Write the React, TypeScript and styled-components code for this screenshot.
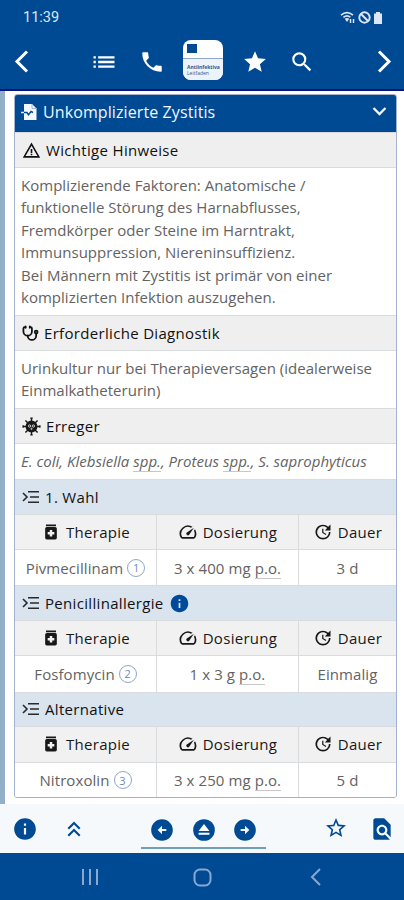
import React from "react";
import styled, { createGlobalStyle } from "styled-components";
import {
  MdFindInPage,
  MdInfo,
  MdList,
  MdMedication,
  MdPhone,
  MdSearch,
  MdSpeed,
  MdStar,
  MdStarOutline,
  MdUpdate,
  MdWarningAmber,
  MdArrowCircleLeft,
  MdArrowCircleRight,
  MdKeyboardDoubleArrowUp,
} from "react-icons/md";
import { Stethoscope } from "lucide-react";

const BLUE = "#004a94";
const LINE = "#d9dcdf";

const GlobalStyle = createGlobalStyle`
  * { box-sizing: border-box; }
  body { margin: 0; background: #fff; font-family: "Open Sans", sans-serif; }
  svg { display: block; flex: none; }
`;

const Screen = styled.div`
  width: 404px;
  height: 900px;
  display: flex;
  flex-direction: column;
  overflow: hidden;
`;

const StatusBar = styled.div`
  height: 35px;
  flex: none;
  display: flex;
  align-items: center;
  justify-content: space-between;
  padding: 0 21px 0 23px;
  background: ${BLUE};
  color: #dce6f5;
  font: 400 14.5px Roboto, sans-serif;
`;

const StatusIcons = styled.div`
  display: flex;
  align-items: center;
  gap: 2px;
`;

const NavBar = styled.header`
  height: 56px;
  flex: none;
  display: grid;
  grid-template-columns: 80px 48px 47px 56px 47px 47px 79px;
  align-items: center;
  justify-items: center;
  padding-bottom: 1px;
  background: ${BLUE};
  border-bottom: 2px solid #00137f;
  color: #fff;
`;

const NavEdge = styled.span<{ $end?: boolean }>`
  justify-self: ${(p) => (p.$end ? "end" : "start")};
  padding: ${(p) => (p.$end ? "0 12px 0 0" : "0 0 0 14px")};
`;

const AppLogo = styled.div`
  width: 40px;
  height: 40px;
  margin-top: -3px;
  display: flex;
  flex-direction: column;
  background: #fff;
  border-radius: 8px;
  overflow: hidden;
`;

const LogoTop = styled.div`
  height: 19px;
  padding: 4px 0 0 4px;
  border-bottom: 1px solid #8fa8c8;
`;

const LogoMark = styled.div`
  width: 10px;
  height: 9px;
  background: ${BLUE};
`;

const LogoText = styled.div`
  flex: 1;
  padding: 5px 0 0 4px;
  background: #edf3fa;
  color: #2d5790;
  font-size: 5px;
  font-weight: 700;
  line-height: 6px;
  white-space: nowrap;
`;

const LogoSub = styled.div`
  font-weight: 400;
  font-size: 5px;
`;

const Content = styled.main`
  height: 713px;
  flex: none;
  padding: 3px 7px 6px 9px;
  border-left: 5px solid #93b0c9;
  background: #fff;
`;

const Card = styled.section`
  height: 704px;
  border: 1px solid #a3b2cc;
  border-radius: 3px;
  overflow: hidden;
`;

const CardTitle = styled.div`
  height: 38px;
  margin: -1px -1px 0;
  display: flex;
  align-items: center;
  gap: 5px;
  padding: 0 10px 3px 7px;
  background: ${BLUE};
  color: #f2f6ff;
  font-size: 16px;
  letter-spacing: 0.1px;
  white-space: nowrap;
  & > :last-child { margin-left: auto; }
`;

const SectionHead = styled.div<{ $blue?: boolean }>`
  height: ${(p) => (p.$blue ? 35.6 : 36)}px;
  display: flex;
  align-items: center;
  gap: 5px;
  padding: 0 7px;
  background: ${(p) => (p.$blue ? "#d9e4ef" : "#efefef")};
  border-top: 1px solid ${LINE};
  border-bottom: 1px solid ${LINE};
  color: #111;
  font-size: 15px;
  font-weight: 500;
  letter-spacing: 0.32px;
  white-space: nowrap;
`;

const Paragraph = styled.p<{ $height: number; $italic?: boolean }>`
  height: ${(p) => p.$height}px;
  margin: 0;
  padding: 6px 0 0 6px;
  color: #636363;
  font-size: 15px;
  font-style: ${(p) => (p.$italic ? "italic" : "normal")};
  line-height: 22.4px;
  letter-spacing: ${(p) => (p.$italic ? 0.02 : 0.02)}px;
  white-space: nowrap;
`;

const Abbr = styled.span`
  border-bottom: 1px solid #c8c8c8;
`;

const Row = styled.div<{ $head?: boolean }>`
  height: ${(p) => (p.$head ? 35.4 : 35.3)}px;
  display: grid;
  grid-template-columns: 141px 142px 1fr;
  background: ${(p) => (p.$head ? "#f1f1f1" : "#fff")};
  color: ${(p) => (p.$head ? "#181818" : "#636363")};
  border-bottom: ${(p) => (p.$head ? 1 : 0)}px solid ${LINE};
  font-size: 15px;
  font-weight: ${(p) => (p.$head ? 500 : 400)};
  letter-spacing: ${(p) => (p.$head ? 0.3 : 0.08)}px;
`;

const Cell = styled.div<{ $gap: number }>`
  display: flex;
  align-items: center;
  justify-content: center;
  gap: ${(p) => p.$gap}px;
  white-space: nowrap;
  & + & { border-left: 1px solid ${LINE}; }
`;

const NoteBadge = styled.span`
  width: 18px;
  height: 18px;
  display: flex;
  align-items: center;
  justify-content: center;
  border: 1px solid #8fa6c8;
  border-radius: 50%;
  color: #6c8bbb;
  font-size: 11px;
  letter-spacing: 0;
`;

const Toolbar = styled.footer`
  height: 49px;
  flex: none;
  display: flex;
  align-items: flex-start;
  padding: 11px 9px 0 12px;
  background: #f6f9fb;
  color: ${BLUE};
`;

const ToolItem = styled.span<{ $before?: number }>`
  margin-left: ${(p) => p.$before ?? 0}px;
  padding-top: 1px;
`;

const PagerGroup = styled.div`
  width: 125px;
  height: 34px;
  margin-left: 54px;
  padding: 2px 8px 0;
  display: flex;
  justify-content: space-between;
  border-bottom: 2px solid #6f9fba;
`;

const SystemBar = styled.div`
  height: 47px;
  flex: none;
  display: grid;
  grid-template-columns: 1fr 1fr 1fr;
  align-items: center;
  justify-items: center;
  padding: 0 31px 0 33px;
  background: ${BLUE};
  border-top: 1px solid #1b3f8c;
  color: #88a8d4;
`;

const Chevron = ({ d, w, h, stroke }: { d: string; w: number; h: number; stroke: number }) => (
  <svg width={w} height={h} viewBox={`0 0 ${w} ${h}`} fill="none" stroke="currentColor" strokeWidth={stroke}>
    <path d={d} />
  </svg>
);

const WifiIcon = () => (
  <svg width="16" height="13" viewBox="0 0 16 13" fill="none" stroke="currentColor" strokeWidth="1.6">
    <path d="M1 4.2Q7 -1 13 4.2M3.4 6.4Q7 3.4 10.3 6.2" />
    <path d="M4.8 7.8L7 11L9.2 7.8Q7 6 4.8 7.8Z" fill="currentColor" stroke="none" />
    <path d="M10.5 8v4M13.5 8v4" strokeWidth="1.5" />
  </svg>
);

const BlockedIcon = () => (
  <svg width="13" height="13" viewBox="0 0 13 13" fill="none" stroke="currentColor" strokeWidth="1.9">
    <circle cx="6.5" cy="6.5" r="5.2" />
    <path d="M3 3l7 7" />
  </svg>
);

const BatteryIcon = () => (
  <svg width="10" height="14" viewBox="0 0 10 14" fill="currentColor">
    <path d="M3 1h4v1.5h2V13H1V2.5h2z" />
  </svg>
);

const FileIcon = () => (
  <svg width="17" height="18" viewBox="0 0 17 18" fill="none">
    <path d="M3 1h8l4.5 4.5V17H3z" fill="#f4f8ff" />
    <path d="M11 1v4.5h4.5" stroke="#9eb7dc" />
    <path d="M3 9.5h3l1.5 2.3L10 8.5l2 1" stroke={BLUE} strokeWidth="1.4" />
    <path d="M0 9.5h3" stroke="#dce8fa" strokeWidth="1.5" />
  </svg>
);

const ListArrowIcon = () => (
  <svg width="18" height="16" viewBox="0 0 18 16" fill="none" stroke="#26292d" strokeWidth="1.6">
    <path d="M1 4l4 4-4 4M6 2.8h11M8 8h9M6 13.2h11" />
  </svg>
);

const VirusIcon = () => (
  <svg width="19" height="19" viewBox="0 0 20 20" fill="none" stroke="#191919" strokeWidth="1.5">
    <path d="M10 1v18M1 10h18M3.6 3.6l12.8 12.8M16.4 3.6L3.6 16.4M8.7 1.2h2.6M8.7 18.8h2.6M1.2 8.7v2.6M18.8 8.7v2.6" />
    <circle cx="10" cy="10" r="5.5" fill="#191919" />
    <g fill="none" stroke="#d6d6d6" strokeWidth="1">
      <circle cx="8" cy="9.5" r="1.2" />
      <circle cx="12" cy="9.5" r="1.2" />
      <circle cx="10" cy="12.5" r=".7" />
    </g>
  </svg>
);

const HomeCircleIcon = () => (
  <svg width="26" height="26" viewBox="0 0 24 24">
    <circle cx="12" cy="12" r="10" fill="currentColor" />
    <path d="M12 6.5l5 6.5H7zM7 14.5h10v1.8H7z" fill="#fff" />
  </svg>
);

const RecentsIcon = () => (
  <svg width="18" height="18" viewBox="0 0 18 18" stroke="currentColor" strokeWidth="2">
    <path d="M2 1v16M9 1v16M16 1v16" />
  </svg>
);

const HomeKeyIcon = () => (
  <svg width="19" height="19" viewBox="0 0 19 19" fill="none" stroke="currentColor" strokeWidth="2">
    <rect x="1.5" y="1.5" width="16" height="16" rx="5.5" />
  </svg>
);

const HeadRow = () => (
  <Row $head>
    <Cell $gap={5}><MdMedication size={20} />Therapie</Cell>
    <Cell $gap={5}><MdSpeed size={20} />Dosierung</Cell>
    <Cell $gap={5}><MdUpdate size={20} />Dauer</Cell>
  </Row>
);

type Option = { title: string; info?: boolean; drug: string; note: number; dose: string; duration: string };

const options: Option[] = [
  { title: "1. Wahl", drug: "Pivmecillinam", note: 1, dose: "3 x 400 mg", duration: "3 d" },
  { title: "Penicillinallergie", info: true, drug: "Fosfomycin", note: 2, dose: "1 x 3 g", duration: "Einmalig" },
  { title: "Alternative", drug: "Nitroxolin", note: 3, dose: "3 x 250 mg", duration: "5 d" },
];

export default function App() {
  return (
    <Screen>
      <GlobalStyle />
      <StatusBar>
        <span>11:39</span>
        <StatusIcons><WifiIcon /><BlockedIcon /><BatteryIcon /></StatusIcons>
      </StatusBar>
      <NavBar>
        <NavEdge><Chevron d="M13 1.5L3 11.5l10 10" w={15} h={23} stroke={3} /></NavEdge>
        <MdList size={28} />
        <MdPhone size={26} />
        <AppLogo>
          <LogoTop><LogoMark /></LogoTop>
          <LogoText>Antiinfektiva<LogoSub>Leitfaden</LogoSub></LogoText>
        </AppLogo>
        <MdStar size={26} />
        <MdSearch size={26} />
        <NavEdge $end><Chevron d="M2 1.5l10 10-10 10" w={15} h={23} stroke={3} /></NavEdge>
      </NavBar>
      <Content>
        <Card>
          <CardTitle>
            <FileIcon />
            <span>Unkomplizierte Zystitis</span>
            <Chevron d="M1.5 2l6 6 6-6" w={15} h={11} stroke={2.3} />
          </CardTitle>
          <SectionHead><MdWarningAmber size={19} />Wichtige Hinweise</SectionHead>
          <Paragraph $height={147}>
            Komplizierende Faktoren: Anatomische /<br />
            funktionelle Störung des Harnabflusses,<br />
            Fremdkörper oder Steine im Harntrakt,<br />
            Immunsuppression, Niereninsuffizienz.<br />
            Bei Männern mit Zystitis ist primär von einer<br />
            komplizierten Infektion auszugehen.
          </Paragraph>
          <SectionHead><Stethoscope size={17} strokeWidth={2.5} />Erforderliche Diagnostik</SectionHead>
          <Paragraph $height={57}>
            Urinkultur nur bei Therapieversagen (idealerweise<br />
            Einmalkatheterurin)
          </Paragraph>
          <SectionHead><VirusIcon />Erreger</SectionHead>
          <Paragraph $height={35} $italic>
            E. coli, Klebsiella <Abbr>spp.</Abbr>, Proteus <Abbr>spp.</Abbr>, S. saprophyticus
          </Paragraph>
          {options.map((o) => (
            <React.Fragment key={o.title}>
              <SectionHead $blue>
                <ListArrowIcon />
                {o.title}
                {o.info && <MdInfo size={21} color="#004a9c" />}
              </SectionHead>
              <HeadRow />
              <Row>
                <Cell $gap={4}>{o.drug}<NoteBadge>{o.note}</NoteBadge></Cell>
                <Cell $gap={0}><span>{o.dose} <Abbr>p.o.</Abbr></span></Cell>
                <Cell $gap={0}>{o.duration}</Cell>
              </Row>
            </React.Fragment>
          ))}
        </Card>
      </Content>
      <Toolbar>
        <ToolItem><MdInfo size={26} /></ToolItem>
        <ToolItem $before={23}><MdKeyboardDoubleArrowUp size={26} /></ToolItem>
        <PagerGroup>
          <MdArrowCircleLeft size={26} />
          <HomeCircleIcon />
          <MdArrowCircleRight size={26} />
        </PagerGroup>
        <ToolItem $before={58}><MdStarOutline size={24} /></ToolItem>
        <ToolItem $before={21}><MdFindInPage size={26} /></ToolItem>
      </Toolbar>
      <SystemBar>
        <RecentsIcon />
        <HomeKeyIcon />
        <Chevron d="M10 1L2 9l8 8" w={12} h={18} stroke={2} />
      </SystemBar>
    </Screen>
  );
}
